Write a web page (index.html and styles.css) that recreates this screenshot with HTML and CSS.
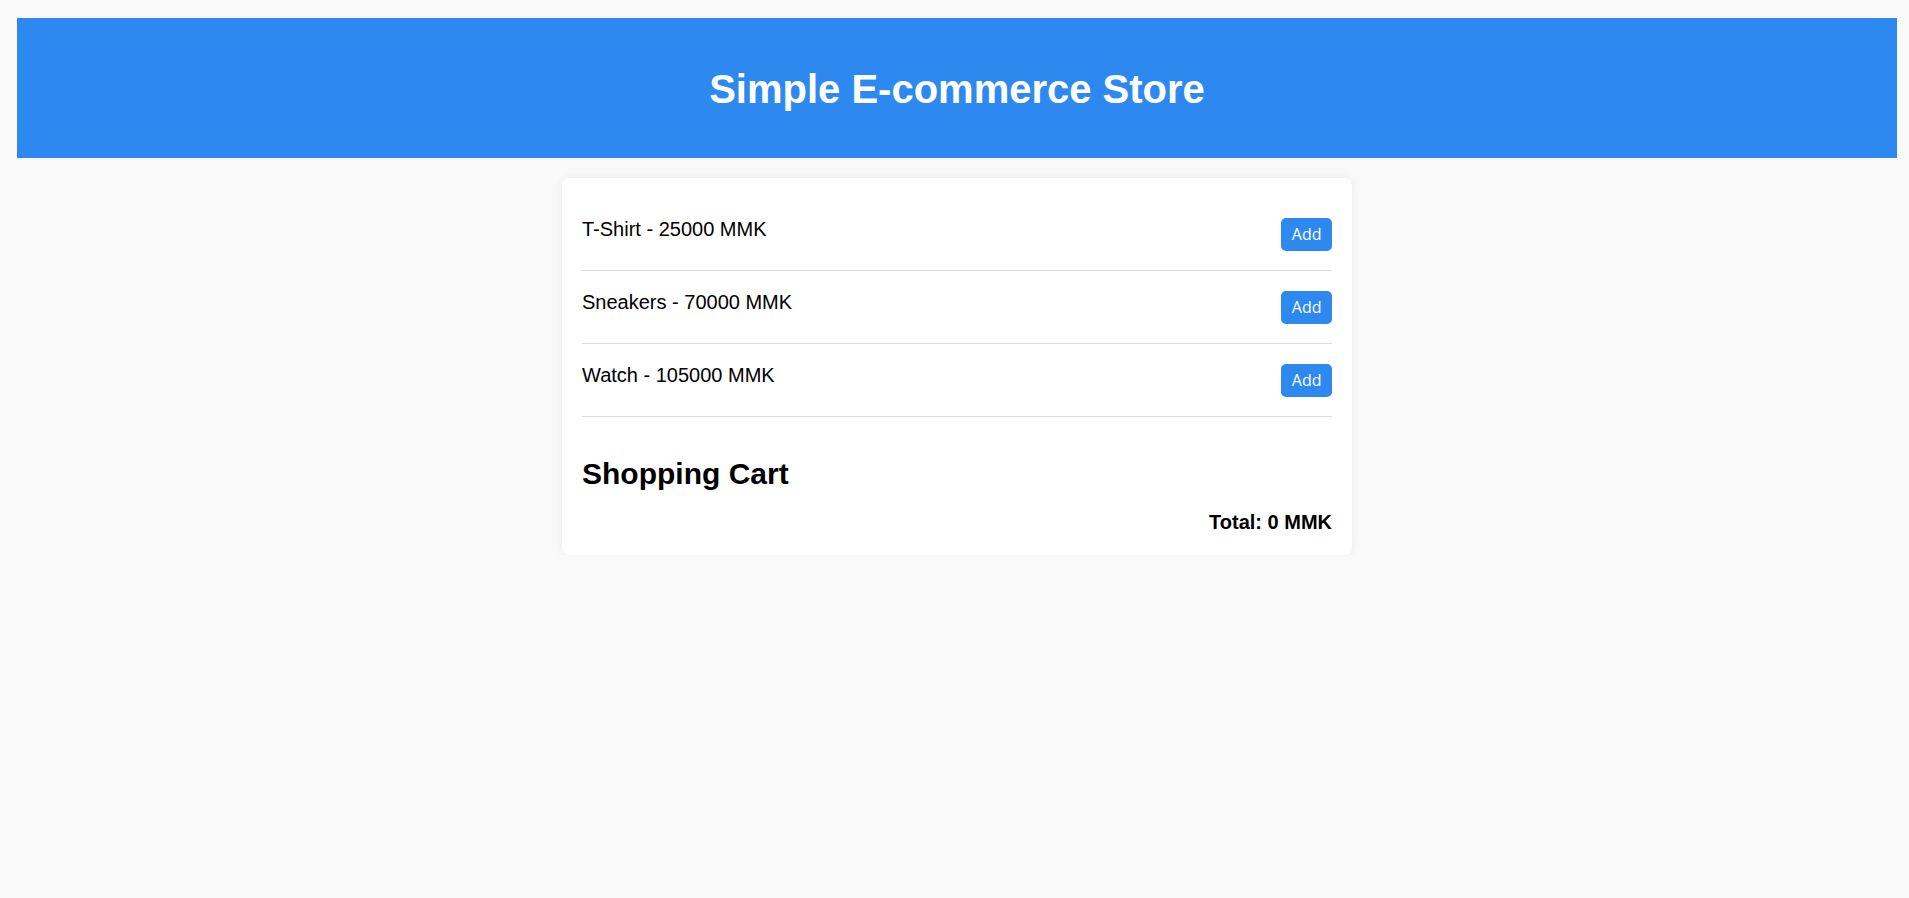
FILE: index.html
```html
<!DOCTYPE html>
<html lang="en">
<head>
<meta charset="utf-8">
<title>Simple E-commerce Store</title>
<link rel="stylesheet" href="styles.css">
</head>
<body>
<header class="site-header">
  <h1 class="site-title">Simple E-commerce Store</h1>
</header>
<main class="store">
  <div class="products">
    <div class="product">
      <span class="product-name">T-Shirt - 25000 MMK</span>
      <button class="add-btn">Add</button>
    </div>
    <div class="product">
      <span class="product-name">Sneakers - 70000 MMK</span>
      <button class="add-btn">Add</button>
    </div>
    <div class="product">
      <span class="product-name">Watch - 105000 MMK</span>
      <button class="add-btn">Add</button>
    </div>
  </div>
  <section class="cart">
    <h2 class="cart-title">Shopping Cart</h2>
    <div class="cart-total">Total: 0 MMK</div>
  </section>
</main>
</body>
</html>
```

FILE: styles.css
```css
html, body {
  background: #f9f9f9;
}
body {
  margin: 18px 12px 0 17px;
  font-family: "Liberation Sans", Arial, sans-serif;
  font-size: 20px;
  color: #000;
}
.site-header {
  background: #2d89ef;
  color: #fff;
  text-align: center;
  padding: 48px 0 46px;
}
.site-title {
  margin: 0;
  font-size: 40px;
  font-weight: bold;
  line-height: 46px;
}
.store {
  max-width: 750px;
  margin: 20px auto 0;
  background: #fff;
  border-radius: 7px;
  box-shadow: 0 0 10px rgba(0, 0, 0, 0.07);
  padding: 20px 20px 21px;
}
.product {
  display: flex;
  justify-content: space-between;
  align-items: flex-start;
  padding: 20px 0 19.5px;
  border-bottom: 1px solid #dddddd;
}
.product-name {
  line-height: normal;
}
.add-btn {
  height: 32.5px;
  padding: 0 10.5px;
  border: none;
  border-radius: 5px;
  background: #2d89ef;
  color: #fff;
  font-family: "Open Sans", "Noto Sans", sans-serif;
  font-size: 16px;
  line-height: 32px;
  cursor: pointer;
}
.cart-title {
  margin: 40px 0 19.5px;
  font-size: 30px;
  font-weight: bold;
  line-height: normal;
}
.cart-total {
  text-align: right;
  font-weight: bold;
  line-height: normal;
}
```
